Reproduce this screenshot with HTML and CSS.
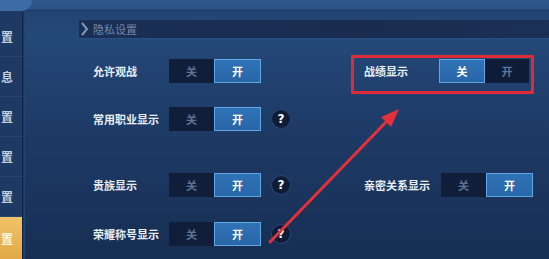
FILE: index.html
```html
<!DOCTYPE html>
<html lang="zh">
<head>
<meta charset="utf-8">
<link rel="stylesheet" href="styles.css">
</head>
<body>
<div class="screen">
  <div class="topbar"><div class="tab-stub"></div></div>
  <div class="body">
    <nav class="sidebar">
      <div class="nav-item">置</div>
      <div class="nav-item">息</div>
      <div class="nav-item">置</div>
      <div class="nav-item">置</div>
      <div class="nav-item">置</div>
      <div class="nav-item active">置</div>
    </nav>
    <div class="divider"></div>
    <main class="main">
      <div class="section-bar">
        <svg class="chev" width="10" height="14" viewBox="0 0 10 14"><path d="M2 1 L7 7 L2 13" fill="none" stroke="#8296b6" stroke-width="2"/></svg>
        <span class="section-title">隐私设置</span>
      </div>

      <div class="row row1">
        <div class="half">
          <span class="label">允许观战</span>
          <div class="toggle"><span class="seg off">关</span><span class="seg on">开</span></div>
        </div>
        <div class="half right marked">
          <span class="label">战绩显示</span>
          <div class="toggle"><span class="seg on first">关</span><span class="seg off">开</span></div>
        </div>
      </div>

      <div class="row row2">
        <div class="half">
          <span class="label">常用职业显示</span>
          <div class="toggle"><span class="seg off">关</span><span class="seg on">开</span></div>
          <span class="help">?</span>
        </div>
      </div>

      <div class="row row3">
        <div class="half">
          <span class="label">贵族显示</span>
          <div class="toggle"><span class="seg off">关</span><span class="seg on">开</span></div>
          <span class="help">?</span>
        </div>
        <div class="half right">
          <span class="label wide">亲密关系显示</span>
          <div class="toggle"><span class="seg off">关</span><span class="seg on">开</span></div>
        </div>
      </div>

      <div class="row row4">
        <div class="half">
          <span class="label">荣耀称号显示</span>
          <div class="toggle"><span class="seg off">关</span><span class="seg on">开</span></div>
          <span class="help">?</span>
        </div>
      </div>
    </main>
  </div>
  <svg class="arrow" width="549" height="259" viewBox="0 0 549 259">
    <line x1="270" y1="242" x2="388" y2="120" stroke="#e5303a" stroke-width="3" stroke-linecap="round"/>
    <polygon points="399,109 381,117 391,127" fill="#e5303a"/>
  </svg>
</div>
</body>
</html>
```

FILE: styles.css
```css
html, body {
  margin: 0;
  padding: 0;
}
body {
  width: 549px;
  height: 259px;
  overflow: hidden;
  background: #1a3359;
  font-family: "Noto Sans CJK SC", "Noto Sans", sans-serif;
}
.screen {
  position: relative;
  width: 549px;
  height: 259px;
  display: flex;
  flex-direction: column;
  background: linear-gradient(180deg, #224372 0px, #244877 40px, #1f3d6a 110px, #1a345c 200px, #172e53 259px);
}
.topbar {
  height: 11px;
  flex: none;
  background: linear-gradient(180deg, #2e5890 0, #2a5188 9px, #1b355e 11px);
  display: flex;
}
.tab-stub {
  width: 32px;
  height: 11px;
  background: #3d6ca5;
  border-bottom-right-radius: 10px;
}
.body {
  flex: 1;
  display: flex;
  min-height: 0;
}
.sidebar {
  width: 22px;
  flex: none;
  display: flex;
  flex-direction: column;
  padding-top: 6px;
  background: #1d3964;
}
.nav-item {
  height: 40px;
  flex: none;
  display: flex;
  align-items: center;
  padding-left: 1px;
  font-size: 12px;
  font-weight: 700;
  color: #c3d0e2;
  border-bottom: 1px solid #284775;
  box-sizing: border-box;
}
.nav-item.active {
  flex: 1;
  border-bottom: none;
  color: #fff6e0;
  background: linear-gradient(180deg, #f0c468 0, #e2a847 100%);
}
.divider {
  width: 3px;
  flex: none;
  background: linear-gradient(90deg, #11254a 0, #11254a 1px, #2b4c7a 2px, #1d3a66 3px);
}
.main {
  flex: 1;
  display: flex;
  flex-direction: column;
}
.section-bar {
  margin-top: 9px;
  margin-left: 54px;
  height: 18px;
  display: flex;
  align-items: center;
  background: linear-gradient(90deg, #1a2f55 0, #192c50 60%, #1b3055 100%);
  box-shadow: 0 1px 0 #2a4f80;
}
.chev {
  margin-left: 1px;
  margin-right: 3px;
  flex: none;
}
.section-title {
  font-size: 11px;
  color: #7486a6;
}
.row {
  display: flex;
  height: 24px;
  padding-left: 68px;
}
.row1 { margin-top: 21px; }
.row2 { margin-top: 24px; }
.row3 { margin-top: 42px; }
.row4 { margin-top: 25px; }
.half {
  width: 271px;
  display: flex;
  align-items: center;
}
.half.right {
  width: auto;
  position: relative;
}
.label {
  width: 76px;
  flex: none;
  font-size: 11px;
  font-weight: 700;
  color: #e8eef8;
  white-space: nowrap;
}
.half.right .label {
  width: 75px;
}
.half.right .label.wide {
  width: 77px;
}
.toggle {
  display: flex;
  height: 24px;
}
.seg {
  display: flex;
  align-items: center;
  justify-content: center;
  font-size: 11px;
  font-weight: 700;
  box-sizing: border-box;
}
.seg.off {
  width: 45px;
  color: #5f7595;
  background: #101e3a;
}
.seg.on {
  width: 47px;
  color: #ffffff;
  background: linear-gradient(180deg, #2f73b6 0, #2866a8 100%);
  border: 1px solid #62a6e2;
}
.seg.on.first {
  width: 46px;
}
.marked .seg.off {
  width: 44px;
  background: #0f1c37;
}
.help {
  width: 18px;
  height: 18px;
  margin-left: 11px;
  border-radius: 50%;
  background: #0f1c36;
  box-shadow: 0 0 0 1px #2a4670;
  color: #ffffff;
  font-size: 12px;
  font-weight: 700;
  display: flex;
  align-items: center;
  justify-content: center;
  font-family: "DejaVu Sans", sans-serif;
}
.marked::after {
  content: "";
  position: absolute;
  left: -13px;
  right: -5px;
  top: -4px;
  bottom: -11px;
  border: 3px solid #e02a35;
  pointer-events: none;
}
.arrow {
  position: absolute;
  left: 0;
  top: 0;
  pointer-events: none;
}
```
